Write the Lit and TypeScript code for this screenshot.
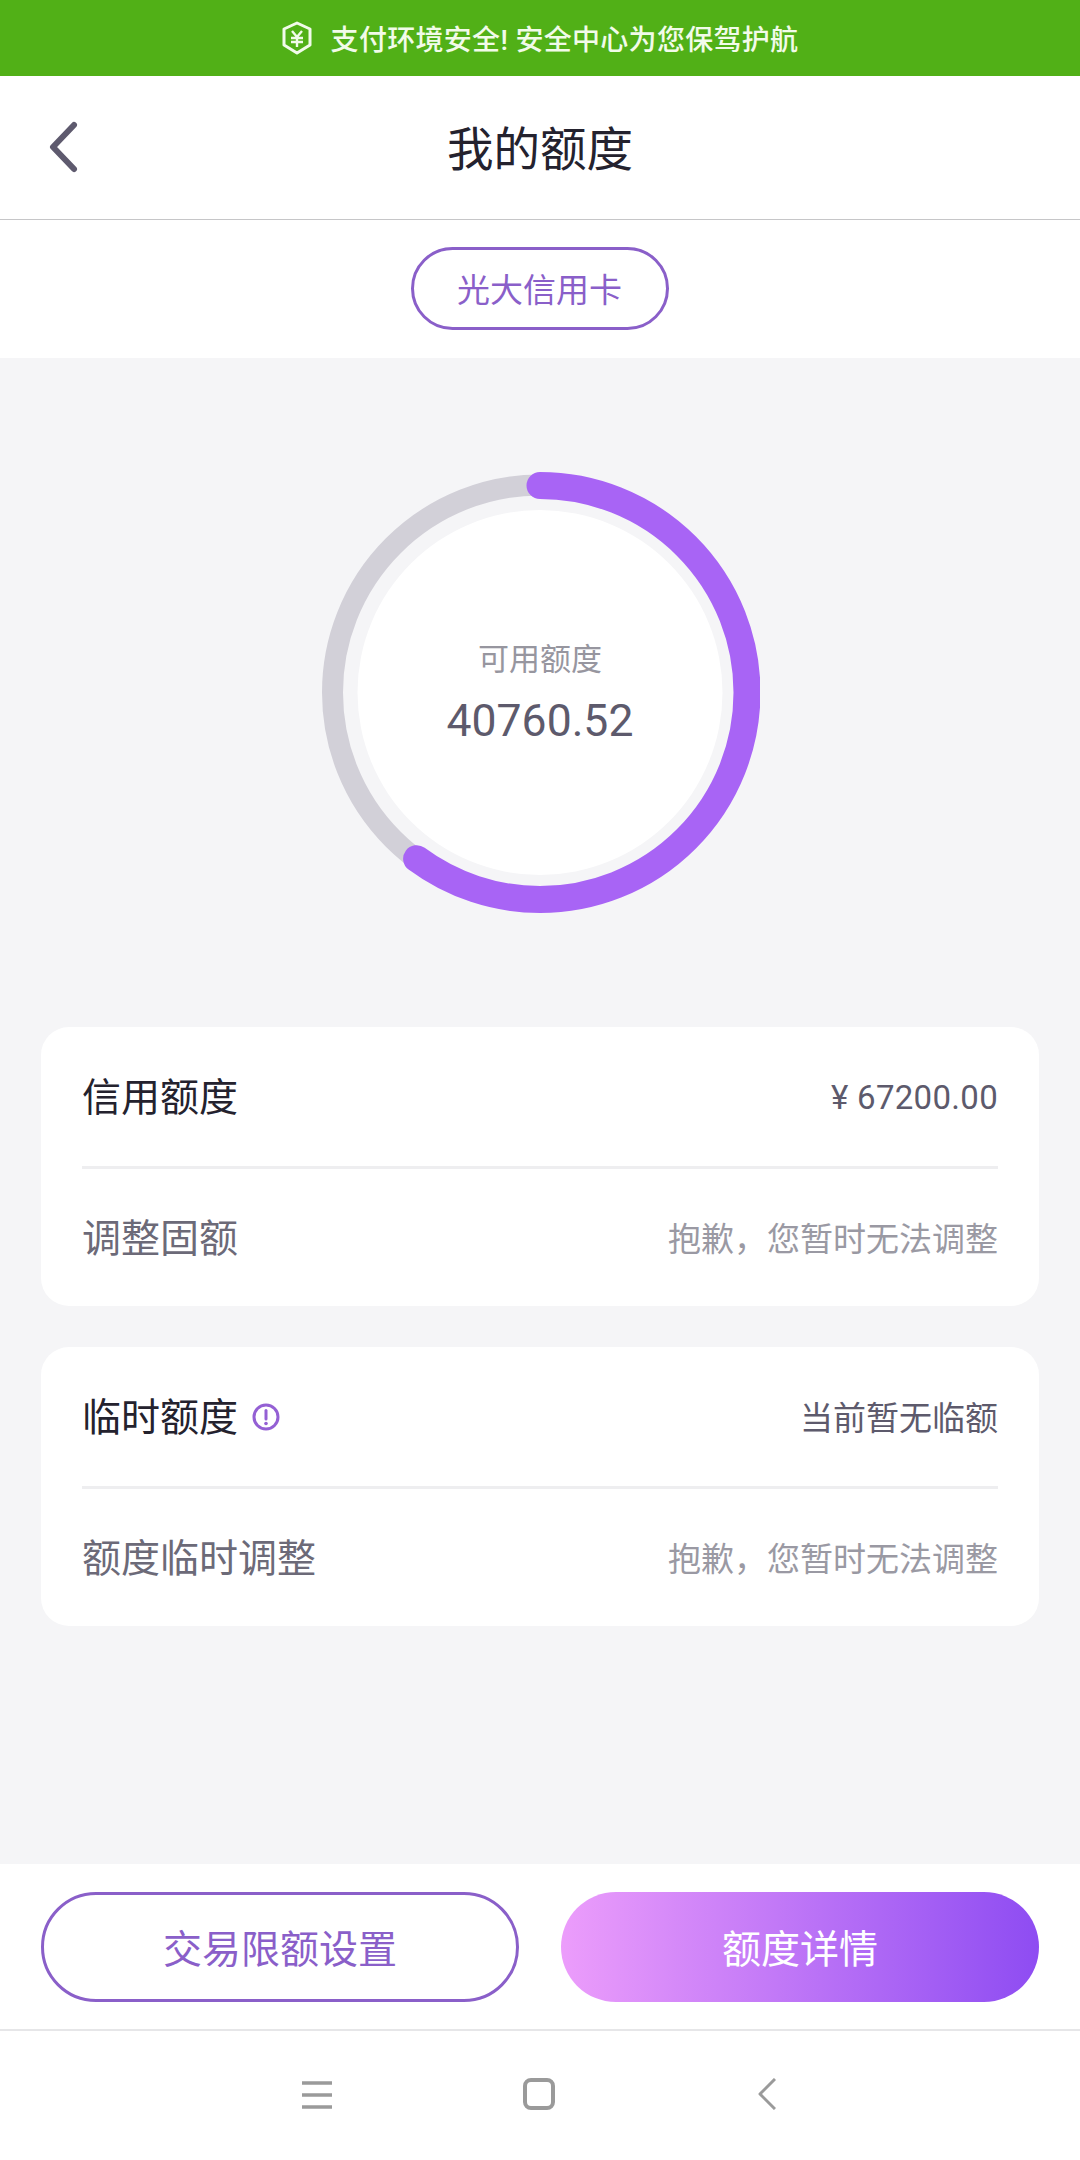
import { customElement } from "lit/decorators.js";
import { html, css, LitElement, svg } from "lit";

const RING_R = 207;
const RING_FRACTION = 0.6014;

@customElement("app-root")
export class AppRoot extends LitElement {
  static styles = css`
    * {
      box-sizing: border-box;
    }

    :host {
      display: flex;
      flex-direction: column;
      height: 2160px;
      width: 1080px;
      background: #f5f5f7;
      font-family: Roboto, "Noto Sans CJK SC", sans-serif;
      color: #24222e;
    }

    .banner {
      height: 76px;
      background: #51b017;
      color: #f1fbe9;
      font-size: 28px;
      font-weight: 500;
      letter-spacing: 0.3px;
      display: flex;
      align-items: center;
      justify-content: center;
      gap: 19px;
    }

    .header {
      height: 144px;
      background: #fff;
      border-bottom: 1px solid #c6c6c8;
      display: flex;
      align-items: center;
      justify-content: center;
      position: relative;
      font-size: 46.5px;
      padding-bottom: 5px;
    }

    .back {
      position: absolute;
      left: 46px;
      top: 42px;
    }

    .tabs {
      height: 138px;
      background: #fff;
      display: flex;
      justify-content: center;
      padding-top: 27px;
    }

    .pill {
      width: 258px;
      height: 83px;
      margin-left: -1px;
      border: 3px solid #8a5fc9;
      border-radius: 42px;
      color: #8a5fc9;
      font-size: 33px;
      padding-bottom: 2px;
      display: flex;
      align-items: center;
      justify-content: center;
    }

    main {
      flex: 1;
      padding: 114px 41px 0;
      display: flex;
      flex-direction: column;
    }

    .ring {
      align-self: center;
      width: 440px;
      height: 441px;
      display: grid;
    }

    .ring > * {
      grid-area: 1 / 1;
    }

    .ring-text {
      display: flex;
      flex-direction: column;
      align-items: center;
      justify-content: center;
      padding-top: 2px;
    }

    .ring-label {
      font-size: 31px;
      color: #97969f;
      line-height: 40px;
    }

    .ring-value {
      font-size: 44.5px;
      color: #5d5a6c;
      line-height: 52px;
      margin-top: 15px;
    }

    .card {
      background: #fff;
      border-radius: 28px;
      padding: 0 41px;
      margin-top: 41px;
    }

    .ring + .card {
      margin-top: 114px;
    }

    .row {
      height: 139px;
      display: flex;
      align-items: center;
      justify-content: space-between;
    }

    .row + .row {
      border-top: 3px solid #eeeef0;
      height: 140px;
    }

    .name {
      font-size: 39px;
      display: flex;
      align-items: center;
      gap: 14px;
      padding-bottom: 5px;
    }

    .name svg {
      margin-top: 5px;
    }

    .name.sub {
      color: #6c6a78;
    }

    .val {
      font-size: 33px;
      color: #5d5a6c;
      padding-bottom: 2px;
    }

    .val.money {
      letter-spacing: 0.3px;
      padding: 2px 0 0;
    }

    .val.hint {
      color: #9a99a3;
    }

    .footer {
      height: 296px;
      background: #fff;
    }

    .actions {
      height: 167px;
      padding: 28px 41px;
      display: grid;
      grid-template-columns: 1fr 1fr;
      gap: 42px;
      border-bottom: 2px solid #e6e6e8;
    }

    .btn {
      height: 110px;
      border-radius: 55px;
      font-size: 39px;
      padding-bottom: 2px;
      display: flex;
      align-items: center;
      justify-content: center;
    }

    .btn.outline {
      border: 3px solid #8a5fc9;
      color: #8a5fc9;
    }

    .btn.fill {
      background: linear-gradient(90deg, #ec9dfb, #8e4cf2);
      color: #fff;
    }

    .nav {
      height: 129px;
      display: flex;
      align-items: flex-start;
      padding: 47px 0 0 302px;
    }

    .nav .home {
      margin: 0 203px 0 191px;
    }
  `;

  private renderRing() {
    const c = 2 * Math.PI * RING_R;
    return svg`
      <svg width="440" height="441" viewBox="0 0 440 441">
        <circle cx="220" cy="220.5" r="207.5" fill="none" stroke="#d2d0d8" stroke-width="21" />
        <circle cx="220" cy="220.5" r="182.5" fill="#fff" />
        <circle
          cx="220"
          cy="220.5"
          r="${RING_R}"
          fill="none"
          stroke="#a864f5"
          stroke-width="27"
          stroke-linecap="round"
          stroke-dasharray="${c * RING_FRACTION} ${c}"
          transform="rotate(-90 220 220.5)"
        />
      </svg>
    `;
  }

  render() {
    return html`
      <div class="banner">
        <svg width="30" height="34" viewBox="0 0 30 34" fill="none" stroke="#f1fbe9">
          <path d="M15 2 L28 8 V24 L15 32 L2 24 V8 Z" stroke-width="3" stroke-linejoin="round" />
          <path d="M10 10 L15 16 L20 10 M9 17 H21 M9 21 H21 M15 16 V26" stroke-width="2.4" />
        </svg>
        <span>支付环境安全! 安全中心为您保驾护航</span>
      </div>

      <div class="header">
        <svg class="back" width="36" height="60" viewBox="0 0 36 60" fill="none">
          <path d="M28 7 L7 29 L28 51" stroke="#5e5a6e" stroke-width="6" stroke-linecap="round" stroke-linejoin="round" />
        </svg>
        我的额度
      </div>

      <div class="tabs"><div class="pill">光大信用卡</div></div>

      <main>
        <div class="ring">
          ${this.renderRing()}
          <div class="ring-text">
            <div class="ring-label">可用额度</div>
            <div class="ring-value">40760.52</div>
          </div>
        </div>

        <div class="card">
          <div class="row">
            <div class="name">信用额度</div>
            <div class="val money">¥ 67200.00</div>
          </div>
          <div class="row">
            <div class="name sub">调整固额</div>
            <div class="val hint">抱歉，您暂时无法调整</div>
          </div>
        </div>

        <div class="card">
          <div class="row">
            <div class="name">
              临时额度
              <svg width="28" height="28" viewBox="0 0 28 28" fill="none">
                <circle cx="14" cy="14" r="12" stroke="#9460d4" stroke-width="3" />
                <path d="M14 7.5 V16" stroke="#9460d4" stroke-width="3" stroke-linecap="round" />
                <circle cx="14" cy="20.5" r="1.8" fill="#9460d4" />
              </svg>
            </div>
            <div class="val">当前暂无临额</div>
          </div>
          <div class="row">
            <div class="name sub">额度临时调整</div>
            <div class="val hint">抱歉，您暂时无法调整</div>
          </div>
        </div>
      </main>

      <div class="footer">
        <div class="actions">
          <div class="btn outline">交易限额设置</div>
          <div class="btn fill">额度详情</div>
        </div>
        <div class="nav">
          <svg width="30" height="32" viewBox="0 0 30 32" fill="none" stroke="#9a9a9a" stroke-width="3.5">
            <path d="M0 5 H30 M0 17 H30 M0 29 H30" />
          </svg>
          <svg class="home" width="32" height="32" viewBox="0 0 32 32" fill="none">
            <rect x="2" y="2" width="28" height="28" rx="6" stroke="#9a9a9a" stroke-width="4" />
          </svg>
          <svg width="18" height="32" viewBox="0 0 18 32" fill="none">
            <path d="M17 1 L2 16 L17 31" stroke="#9a9a9a" stroke-width="3" stroke-linejoin="round" />
          </svg>
        </div>
      </div>
    `;
  }
}

declare global {
  interface HTMLElementTagNameMap {
    "app-root": AppRoot;
  }
}
